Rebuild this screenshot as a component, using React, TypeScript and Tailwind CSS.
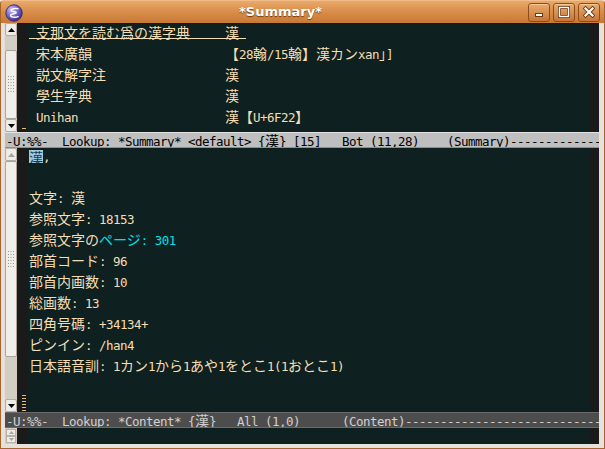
import React from "react";

const LAT = "font-['DejaVu_Sans_Mono',monospace] text-[12.5px] tracking-[-0.525px]";
const CJK = "font-['Noto_Sans_CJK_JP',sans-serif] text-[14px] tracking-normal";
const RE = /([\u3000-\u30ff\u3400-\u9fff\uff00-\uffef]+)/;

// splits a string into latin / cjk runs so every run gets its own font & size
function T({ s }: { s: string }) {
  return (
    <>
      {s.split(RE).map((p, i) =>
        p === "" ? null : (
          <span key={i} className={i % 2 ? CJK : LAT}>
            {p}
          </span>
        )
      )}
    </>
  );
}

function Line({ children }: { children?: React.ReactNode }) {
  return <div className="h-[21px] leading-[14px] whitespace-pre">{children}</div>;
}

function Arrow({ up, dim }: { up?: boolean; dim?: boolean }) {
  return (
    <div className="h-[13px] shrink-0 flex items-center justify-center bg-[#efebe7] border border-[#b3aca2] rounded-[2px]">
      <svg width="7" height="4" viewBox="0 0 7 4">
        <path d={up ? "M0 4L3.5 0L7 4Z" : "M0 0L3.5 4L7 0Z"} fill={dim ? "#a9a39b" : "#000"} />
      </svg>
    </div>
  );
}

function Grip() {
  const dots = [];
  for (let r = 0; r < 6; r++)
    for (let c = 0; c < 3; c++)
      dots.push(<rect key={`${r}-${c}`} x={c * 2.5} y={r * 3} width="1" height="1" fill="#9e978d" />);
  return (
    <svg width="7" height="17" viewBox="0 0 7 17">
      {dots}
    </svg>
  );
}

function Thumb({ h }: { h: string }) {
  return (
    <div className={`${h} shrink-0 bg-[#f2efeb] border border-[#aaa398] rounded-[2px] flex items-center justify-center`}>
      <Grip />
    </div>
  );
}

function Dashes({ n }: { n: number }) {
  return (
    <div className="flex flex-col gap-[2px]">
      {Array.from({ length: n }).map((_, i) => (
        <div key={i} className="w-[4px] h-[1px] bg-[#e6bb76]" />
      ))}
    </div>
  );
}

function ModeLine({ text, active }: { text: string; active?: boolean }) {
  return (
    <div
      className={
        active
          ? "h-[16px] shrink-0 bg-[#bfbfbf] text-black border-t border-t-[#e2e2e2] border-b border-b-[#8f8f8f] pl-[1px] leading-[14px] whitespace-pre overflow-hidden"
          : "h-[16px] shrink-0 bg-[#4d4d4d] text-[#d0d0d0] border-y border-[#6a6a6a] pl-[1px] leading-[14px] whitespace-pre overflow-hidden"
      }
    >
      <T s={text + "-".repeat(90)} />
    </div>
  );
}

function TitleBtn({ children }: { children: React.ReactNode }) {
  return (
    <div className="w-[22px] h-[19px] rounded-[3px] border border-[#8b4d1c] bg-gradient-to-b from-[#e9ab6d] to-[#c67636] shadow-[inset_0_1px_0_#f5c896] flex items-center justify-center">
      {children}
    </div>
  );
}

const summary: [string, string][] = [
  ["宋本廣韻", "【28翰/15翰】漢カンxan｣]"],
  ["説文解字注", "漢"],
  ["學生字典", "漢"],
  ["Unihan", "漢【U+6F22】"],
];

const content = [
  "文字: 漢",
  "参照文字: 18153",
  null,
  "部首コード: 96",
  "部首内画数: 10",
  "総画数: 13",
  "四角号碼: +34134+",
  "ピンイン: /han4",
  "日本語音訓: 1カン1から1あや1をとこ1(1おとこ1)",
];

export default function App() {
  return (
    <div className="w-[605px] h-[449px] flex flex-col overflow-hidden bg-[#efebe7] text-[#f5deb3]">
      {/* title bar */}
      <div className="h-[23px] shrink-0 flex items-center bg-gradient-to-b from-[#e9a96a] via-[#d88d48] to-[#c87836] border-t border-[#f2bd88] border-x border-x-[#a8642c] rounded-t-[4px]">
        <div className="pl-[4px] pt-[1px] shrink-0">
          <svg width="18" height="18" viewBox="0 0 18 18">
            <defs>
              <radialGradient id="eg" cx="35%" cy="30%" r="75%">
                <stop offset="0" stopColor="#cfcaf4" />
                <stop offset="0.5" stopColor="#7c69cf" />
                <stop offset="1" stopColor="#3b2988" />
              </radialGradient>
            </defs>
            <circle cx="9" cy="9" r="8.2" fill="url(#eg)" stroke="#2b1e64" strokeWidth="0.8" />
            <path
              d="M12.9 4.7C9.6 3.7 5.6 5.3 6.3 6.8C7 8.2 11.1 7.4 11.3 8.6C11.5 9.9 5.7 9.6 5.5 11.4C5.3 13.2 10.1 13.7 13.1 12.6"
              fill="none"
              stroke="#fff"
              strokeWidth="1.4"
              strokeLinecap="round"
            />
          </svg>
        </div>
        <div className="flex-1 min-w-0 text-center pl-[10px] font-['DejaVu_Sans',sans-serif] font-bold text-[13px] text-white [text-shadow:0_1px_1px_#6e3b10]">
          *Summary*
        </div>
        <div className="flex gap-[3px] pr-[4px] shrink-0">
          <TitleBtn>
            <svg width="12" height="12" viewBox="0 0 12 12">
              <rect x="2.5" y="7.5" width="7" height="3" fill="#fff" stroke="#6b3a12" strokeWidth="1" />
            </svg>
          </TitleBtn>
          <TitleBtn>
            <svg width="12" height="12" viewBox="0 0 12 12">
              <rect x="1.5" y="1.5" width="9" height="9" fill="none" stroke="#6b3a12" strokeWidth="3" />
              <rect x="1.5" y="1.5" width="9" height="9" fill="none" stroke="#fff" strokeWidth="1.4" />
            </svg>
          </TitleBtn>
          <TitleBtn>
            <svg width="12" height="12" viewBox="0 0 12 12">
              <path d="M2.5 2.5L9.5 9.5M9.5 2.5L2.5 9.5" stroke="#6b3a12" strokeWidth="4" strokeLinecap="square" />
              <path d="M2.5 2.5L9.5 9.5M9.5 2.5L2.5 9.5" stroke="#fff" strokeWidth="2.2" strokeLinecap="square" />
            </svg>
          </TitleBtn>
        </div>
      </div>

      <div className="flex-1 min-h-0 flex">
        {/* left frame */}
        <div className="w-[5px] shrink-0 border-l border-[#a8642c] bg-[#e6e1da]" />

        <div className="flex-1 min-w-0 flex flex-col">
          {/* top window */}
          <div className="h-[109px] shrink-0 flex">
            <div className="w-[12px] shrink-0 flex flex-col bg-[#d4cdc3]">
              <Arrow up />
              <div className="flex-1 flex flex-col pt-[14px]">
                <Thumb h="flex-1" />
              </div>
              <Arrow />
            </div>
            <div className="w-[11px] shrink-0 bg-[#1a1a1a] flex flex-col justify-end items-start pl-[5px] pb-[3px]">
              <Dashes n={1} />
            </div>
            <div className="flex-1 min-w-0 bg-[#0e2020] pt-[2px] pl-[1px] overflow-hidden">
              <div className="h-[21px]">
                <div className="flex w-[217px] h-[14px] border-b border-[#f5deb3] leading-[14px] whitespace-pre">
                  <div className="w-[196px] shrink-0 pl-[7px]">
                    <T s="支那文を読む爲の漢字典" />
                  </div>
                  <div>
                    <T s="漢" />
                  </div>
                </div>
              </div>
              {summary.map(([k, v]) => (
                <div key={k} className="h-[21px] flex leading-[14px] whitespace-pre">
                  <div className="w-[196px] shrink-0 pl-[7px]">
                    <T s={k} />
                  </div>
                  <div>
                    <T s={v} />
                  </div>
                </div>
              ))}
            </div>
            <div className="w-[10px] shrink-0 bg-[#1a1a1a]" />
          </div>

          <ModeLine active text="-U:%%-  Lookup: *Summary* <default> {漢} [15]   Bot (11,28)    (Summary)" />

          {/* bottom window */}
          <div className="h-[264px] shrink-0 flex">
            <div className="w-[12px] shrink-0 flex flex-col bg-[#d4cdc3]">
              <Arrow up dim />
              <Thumb h="h-[196px]" />
              <div className="flex-1" />
              <Arrow />
            </div>
            <div className="w-[11px] shrink-0 bg-[#1a1a1a] flex flex-col justify-end items-start pl-[5px] pb-[1px]">
              <Dashes n={6} />
            </div>
            <div className="flex-1 min-w-0 bg-[#0e2020] pl-[1px] overflow-hidden">
              <div className="h-[21px] flex items-start leading-[14px] whitespace-pre">
                <div className="mt-[2px] w-[14px] h-[13px] flex items-center justify-center overflow-hidden bg-[#9ccbe0] text-[#1c3a4f]">
                  <T s="漢" />
                </div>
                <div>
                  <T s="," />
                </div>
              </div>
              <Line />
              {content.map((c, i) =>
                c === null ? (
                  <Line key={i}>
                    <T s="参照文字の" />
                    <span className="text-[#00e2ea]">
                      <T s="ページ: 301" />
                    </span>
                  </Line>
                ) : (
                  <Line key={i}>
                    <T s={c} />
                  </Line>
                )
              )}
            </div>
            <div className="w-[10px] shrink-0 bg-[#1a1a1a]" />
          </div>

          <ModeLine text="-U:%%-  Lookup: *Content* {漢}   All (1,0)      (Content)" />

          {/* minibuffer */}
          <div className="h-[16px] shrink-0 flex">
            <div className="w-[12px] shrink-0 flex flex-col justify-center bg-[#d4cdc3] px-[1px]">
              <div className="h-[7px] flex items-center justify-center bg-[#efebe7] border border-[#b8b1a7]">
                <svg width="5" height="3" viewBox="0 0 5 3">
                  <path d="M0 3L2.5 0L5 3Z" fill="#a9a39b" />
                </svg>
              </div>
              <div className="h-[7px] flex items-center justify-center bg-[#efebe7] border border-[#b8b1a7]">
                <svg width="5" height="3" viewBox="0 0 5 3">
                  <path d="M0 0L2.5 3L5 0Z" fill="#a9a39b" />
                </svg>
              </div>
            </div>
            <div className="w-[11px] shrink-0 bg-[#1a1a1a]" />
            <div className="flex-1 min-w-0 bg-[#0e2020]" />
            <div className="w-[10px] shrink-0 bg-[#1a1a1a]" />
          </div>
        </div>

        {/* right frame */}
        <div className="w-[6px] shrink-0 border-r border-[#a8642c] bg-[#e6e1da]" />
      </div>

      {/* bottom frame */}
      <div className="h-[5px] shrink-0 bg-[#e6e1da] border-x border-b border-[#a8642c]" />
    </div>
  );
}
